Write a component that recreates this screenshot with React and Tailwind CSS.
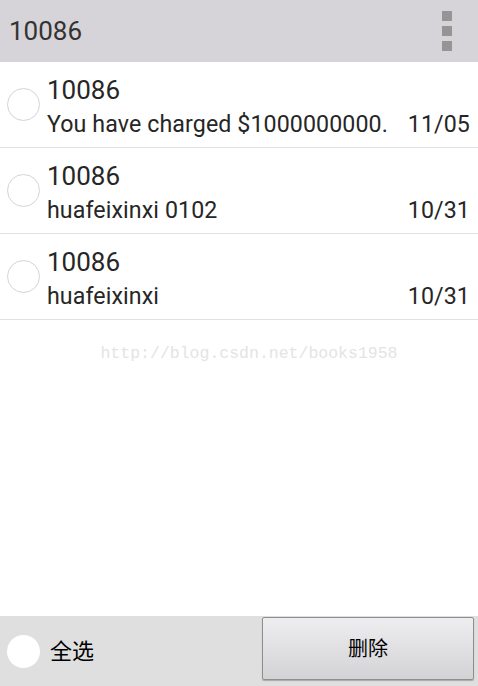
import React from "react";

const rows = [
  { title: "10086", body: "You have charged $1000000000.", date: "11/05" },
  { title: "10086", body: "huafeixinxi 0102", date: "10/31" },
  { title: "10086", body: "huafeixinxi", date: "10/31" },
];

export default function App() {
  return (
    <div
      className="w-[478px] h-[686px] flex flex-col bg-white overflow-hidden"
      style={{ fontFamily: 'Roboto, "Noto Sans CJK SC", sans-serif' }}
    >
      <div className="h-[62px] shrink-0 bg-[#d6d4d8] flex items-center justify-between pl-[9px] pr-[26px]">
        <span className="text-[26px] leading-none text-[#333333]">10086</span>
        <div className="flex flex-col gap-[5px]">
          <div className="w-[10px] h-[10px] bg-[#959595]" />
          <div className="w-[10px] h-[10px] bg-[#959595]" />
          <div className="w-[10px] h-[10px] bg-[#959595]" />
        </div>
      </div>
      <div className="flex flex-col">
        {rows.map((r, i) => (
          <div
            key={i}
            className="h-[86px] border-b border-[#e2e2e2] flex pl-[7px] pr-[8px]"
          >
            <div className="self-center w-[33px] h-[33px] rounded-full border border-[#d4d4d4] bg-white shrink-0" />
            <div className="flex-1 ml-[7px] flex flex-col pt-[13px]">
              <div className="text-[26px] leading-[30px] text-[#262626]">{r.title}</div>
              <div className="mt-[5px] flex justify-between text-[23.2px] tracking-[0.1px] leading-[28px] text-[#262626]">
                <span>{r.body}</span>
                <span>{r.date}</span>
              </div>
            </div>
          </div>
        ))}
      </div>
      <div className="flex-1 flex justify-center pt-[26px]">
        <span
          className="text-[16.5px] leading-none text-[#e4e4e4] ml-[20px]"
          style={{ fontFamily: '"Liberation Mono", monospace' }}
        >
          http://blog.csdn.net/books1958
        </span>
      </div>
      <div className="h-[70px] shrink-0 bg-[#dfdfdf] flex items-start pt-[1px] pl-[7px] pr-[4px]">
        <div className="self-center w-[33px] h-[33px] rounded-full bg-white shrink-0" />
        <span className="self-center ml-[10px] text-[22px] text-black">全选</span>
        <div className="flex-1" />
        <button className="w-[212px] h-[63px] rounded-[2px] border border-[#8e8e8e] bg-gradient-to-b from-[#eeedef] to-[#d3d2d5] shadow-[0_1px_1px_rgba(0,0,0,0.25)] text-[20px] text-black">
          删除
        </button>
      </div>
    </div>
  );
}
